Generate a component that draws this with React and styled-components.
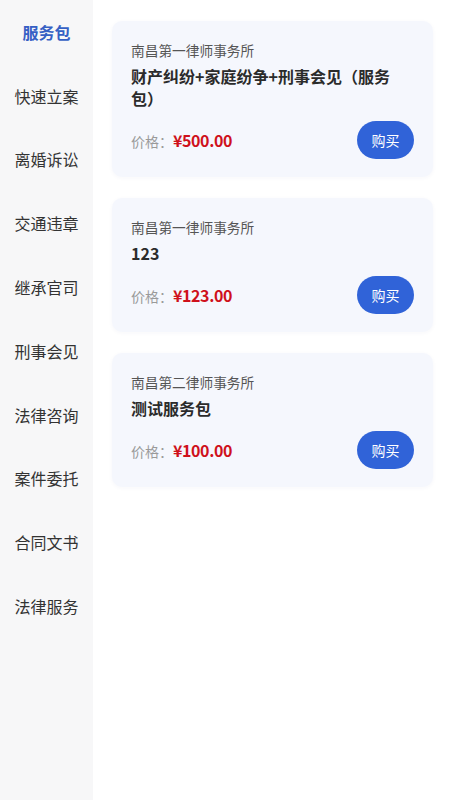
import React, { useState } from "react";
import styled, { createGlobalStyle } from "styled-components";

const GlobalStyle = createGlobalStyle`
  html, body { margin: 0; padding: 0; background: #ffffff; }
  body { font-family: "Noto Sans CJK SC", "Noto Sans", sans-serif; }
  * { box-sizing: border-box; }
`;

const Page = styled.div`
  display: flex;
  width: 450px;
  height: 800px;
  background: #ffffff;
  overflow: hidden;
`;

const Sidebar = styled.nav`
  width: 93px;
  flex-shrink: 0;
  background: #f7f7f8;
  display: flex;
  flex-direction: column;
`;

const NavItem = styled.div`
  height: 63.8px;
  display: flex;
  align-items: center;
  justify-content: center;
  font-size: 16px;
  color: ${(p) => (p.$active ? "#3560c4" : "#333333")};
  font-weight: ${(p) => (p.$active ? 700 : 400)};
  cursor: pointer;
`;

const Content = styled.main`
  flex: 1;
  padding: 21px 17px 0 19px;
  display: flex;
  flex-direction: column;
  gap: 21px;
`;

const Card = styled.div`
  background: #f5f7fd;
  border-radius: 10px;
  padding: 19px 19px 18px 19px;
  box-shadow: 0 1px 4px rgba(40, 60, 120, 0.04);
  display: flex;
  flex-direction: column;
`;

const Firm = styled.div`
  font-size: 13.7px;
  line-height: 20px;
  color: #555555;
`;

const Title = styled.div`
  margin-top: 5px;
  font-size: 16px;
  line-height: 22px;
  font-weight: 700;
  color: #2b2b2b;
  padding-right: 10px;
`;

const PriceRow = styled.div`
  margin-top: 12px;
  display: flex;
  align-items: center;
  justify-content: space-between;
`;

const Price = styled.div`
  display: flex;
  align-items: baseline;
`;

const PriceLabel = styled.span`
  font-size: 14px;
  color: #9a9a9a;
`;

const PriceValue = styled.span`
  font-size: 16px;
  font-weight: 700;
  letter-spacing: -0.4px;
  color: #cf111b;
`;

const BuyButton = styled.button`
  width: 57px;
  height: 38px;
  border: none;
  border-radius: 19px;
  background: #3063d8;
  color: #ffffff;
  font-family: inherit;
  font-size: 14px;
  padding: 0;
  cursor: pointer;
`;

const navItems = [
  "服务包",
  "快速立案",
  "离婚诉讼",
  "交通违章",
  "继承官司",
  "刑事会见",
  "法律咨询",
  "案件委托",
  "合同文书",
  "法律服务",
];

const packages = [
  { firm: "南昌第一律师事务所", title: "财产纠纷+家庭纷争+刑事会见（服务包）", price: "¥500.00" },
  { firm: "南昌第一律师事务所", title: "123", price: "¥123.00" },
  { firm: "南昌第二律师事务所", title: "测试服务包", price: "¥100.00" },
];

export default function App() {
  const [active, setActive] = useState(0);
  return (
    <>
      <GlobalStyle />
      <Page>
        <Sidebar>
          {navItems.map((n, i) => (
            <NavItem key={n} $active={i === active} onClick={() => setActive(i)}>
              {n}
            </NavItem>
          ))}
        </Sidebar>
        <Content>
          {packages.map((p, i) => (
            <Card key={i}>
              <Firm>{p.firm}</Firm>
              <Title>{p.title}</Title>
              <PriceRow>
                <Price>
                  <PriceLabel>价格：</PriceLabel>
                  <PriceValue>{p.price}</PriceValue>
                </Price>
                <BuyButton>购买</BuyButton>
              </PriceRow>
            </Card>
          ))}
        </Content>
      </Page>
    </>
  );
}
